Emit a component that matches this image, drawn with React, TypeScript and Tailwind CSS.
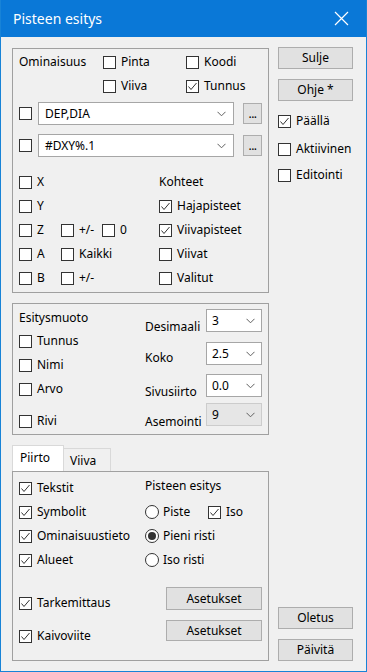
import React from 'react';

const font = { fontFamily: '"Segoe UI", "Noto Sans", "Open Sans", sans-serif' };

const Check: React.FC<{ checked?: boolean }> = ({ checked }) => (
  <span className="w-[13px] h-[13px] shrink-0 border border-[#333333] bg-white flex items-center justify-center">
    {checked && (
      <svg width="11" height="11" viewBox="0 0 11 11">
        <polyline points="1.5,5.5 4,8.5 9.5,2" fill="none" stroke="#333333" strokeWidth="1" />
      </svg>
    )}
  </span>
);

const Radio: React.FC<{ checked?: boolean }> = ({ checked }) => (
  <span className="w-[14px] h-[14px] shrink-0 rounded-full border border-[#333333] bg-white flex items-center justify-center">
    {checked && <span className="w-[8px] h-[8px] rounded-full bg-[#333333]" />}
  </span>
);

const CheckItem: React.FC<{ label?: string; checked?: boolean; className?: string }> = ({ label, checked, className }) => (
  <div className={`flex items-center whitespace-nowrap ${className ?? ''}`}>
    <Check checked={checked} />
    {label && <span className="ml-[5px]">{label}</span>}
  </div>
);

const Chevron: React.FC = () => (
  <svg width="9" height="6" viewBox="0 0 9 6">
    <polyline points="0.5,0.8 4.5,4.8 8.5,0.8" fill="none" stroke="#606060" strokeWidth="1" />
  </svg>
);

const Button: React.FC<{ label: string; className?: string }> = ({ label, className }) => (
  <div className={`border border-[#adadad] bg-[#e1e1e1] flex items-center justify-center ${className ?? ''}`}>
    {label}
  </div>
);

const Combo: React.FC<{ value: string }> = ({ value }) => (
  <div className="ml-[6px] w-[196px] h-[23px] border border-[#a6a6a6] bg-white flex items-center justify-between pl-[6px] pr-[7px]">
    <span>{value}</span>
    <Chevron />
  </div>
);

const Select: React.FC<{ value: string; disabled?: boolean }> = ({ value, disabled }) => (
  <div
    className={`w-[56px] h-[23px] border flex items-center justify-between pl-[5px] pr-[6px] shrink-0 ${
      disabled ? 'bg-[#e6e6e6] border-[#cccccc]' : 'bg-white border-[#a6a6a6]'
    }`}
  >
    <span>{value}</span>
    <Chevron />
  </div>
);

const SelectRow: React.FC<{ label: string; value: string; labelTop: string; rowTop: string; disabled?: boolean }> = ({
  label,
  value,
  labelTop,
  rowTop,
  disabled,
}) => (
  <div className={`h-[23px] flex items-start justify-between ${rowTop}`}>
    <span className={`whitespace-nowrap ${labelTop}`}>{label}</span>
    <Select value={value} disabled={disabled} />
  </div>
);

export default function App() {
  return (
    <div
      className="w-[367px] h-[672px] bg-[#f0f0f0] border-x border-b border-[#1883d7] flex flex-col text-[12px] leading-[16px] text-black overflow-hidden"
      style={font}
    >
      {/* title bar */}
      <div className="h-[37px] shrink-0 bg-[#0a78d7] flex items-center justify-between pl-[12px] pr-[17px] text-white">
        <span className="text-[14px] leading-[20px]">Pisteen esitys</span>
        <svg width="15" height="15" viewBox="0 0 15 15">
          <path d="M1 1 L14 14 M14 1 L1 14" stroke="white" strokeWidth="1.2" />
        </svg>
      </div>

      <div className="flex pl-[11px]">
        {/* left column */}
        <div className="w-[257px] flex flex-col">
          {/* group 1 */}
          <div className="mt-[11px] h-[245px] border border-[#a0a0a0] pl-[6px] flex flex-col">
            <div className="mt-[1px] h-[24px] flex items-center">
              <span className="w-[84px]">Ominaisuus</span>
              <CheckItem label="Pinta" className="w-[83px]" />
              <CheckItem label="Koodi" />
            </div>
            <div className="h-[24px] flex items-center pl-[84px]">
              <CheckItem label="Viiva" className="w-[83px]" />
              <CheckItem label="Tunnus" checked />
            </div>
            <div className="mt-[4px] h-[23px] flex items-center">
              <Check />
              <Combo value="DEP,DIA" />
              <Button label="..." className="ml-[9px] w-[19px] h-[21px] tracking-[-0.5px]" />
            </div>
            <div className="mt-[9px] h-[23px] flex items-center">
              <Check />
              <Combo value="#DXY%.1" />
              <Button label="..." className="ml-[9px] w-[19px] h-[21px] tracking-[-0.5px]" />
            </div>
            <div className="mt-[13px] flex flex-col">
              <div className="h-[24px] flex items-center">
                <CheckItem label="X" className="w-[42px]" />
                <div className="w-[98px]" />
                <span>Kohteet</span>
              </div>
              <div className="h-[24px] flex items-center">
                <CheckItem label="Y" className="w-[42px]" />
                <div className="w-[98px]" />
                <CheckItem label="Hajapisteet" checked />
              </div>
              <div className="h-[24px] flex items-center">
                <CheckItem label="Z" className="w-[42px]" />
                <CheckItem label="+/-" className="w-[41px]" />
                <CheckItem label="0" className="w-[57px]" />
                <CheckItem label="Viivapisteet" checked />
              </div>
              <div className="h-[24px] flex items-center">
                <CheckItem label="A" className="w-[42px]" />
                <CheckItem label="Kaikki" className="w-[98px]" />
                <CheckItem label="Viivat" />
              </div>
              <div className="h-[24px] flex items-center">
                <CheckItem label="B" className="w-[42px]" />
                <CheckItem label="+/-" className="w-[98px]" />
                <CheckItem label="Valitut" />
              </div>
            </div>
          </div>

          {/* group 2 */}
          <div className="mt-[10px] h-[132px] border border-[#a0a0a0] pl-[6px] pr-[6px] flex">
            <div className="w-[126px] flex flex-col">
              <span className="mt-[6px]">Esitysmuoto</span>
              <CheckItem label="Tunnus" className="mt-[3px] h-[24px]" />
              <CheckItem label="Nimi" className="h-[24px]" />
              <CheckItem label="Arvo" className="h-[24px]" />
              <CheckItem label="Rivi" className="mt-[8px] h-[24px]" />
            </div>
            <div className="w-[117px] flex flex-col">
              <SelectRow label="Desimaali" value="3" rowTop="mt-[5px]" labelTop="mt-[10px]" />
              <SelectRow label="Koko" value="2.5" rowTop="mt-[10px]" labelTop="mt-[8px]" />
              <SelectRow label="Sivusiirto" value="0.0" rowTop="mt-[9px]" labelTop="mt-[10px]" />
              <SelectRow label="Asemointi" value="9" rowTop="mt-[6px]" labelTop="mt-[11px]" disabled />
            </div>
          </div>

          {/* tabs */}
          <div className="mt-[10px] h-[26px] flex items-end">
            <div className="w-[52px] h-[26px] bg-white border-t border-l border-r border-[#d9d9d9] pl-[7px] pt-[4px]">Piirto</div>
            <div className="w-[47px] h-[23px] bg-[#f0f0f0] border-t border-r border-[#d9d9d9] pl-[6px] pt-[4px]">Viiva</div>
          </div>
          <div className="h-[190px] border border-[#a0a0a0] pl-[6px] pt-[4px] flex flex-col">
            <div className="h-[24px] flex items-center">
              <CheckItem label="Tekstit" checked className="w-[126px]" />
              <span className="-mt-[4px]">Pisteen esitys</span>
            </div>
            <div className="h-[24px] flex items-center">
              <CheckItem label="Symbolit" checked className="w-[126px]" />
              <div className="w-[63px] flex items-center">
                <Radio />
                <span className="ml-[4px]">Piste</span>
              </div>
              <CheckItem label="Iso" checked />
            </div>
            <div className="h-[24px] flex items-center">
              <CheckItem label="Ominaisuustieto" checked className="w-[126px]" />
              <Radio checked />
              <span className="ml-[4px]">Pieni risti</span>
            </div>
            <div className="h-[24px] flex items-center">
              <CheckItem label="Alueet" checked className="w-[126px]" />
              <Radio />
              <span className="ml-[4px]">Iso risti</span>
            </div>
            <div className="mt-[15px] flex items-start">
              <CheckItem label="Tarkemittaus" checked className="w-[147px] mt-[8px]" />
              <Button label="Asetukset" className="w-[96px] h-[23px]" />
            </div>
            <div className="mt-[9px] flex items-start">
              <CheckItem label="Kaivoviite" checked className="w-[147px] mt-[8px]" />
              <Button label="Asetukset" className="w-[96px] h-[21px]" />
            </div>
          </div>
        </div>

        {/* right column */}
        <div className="ml-[9px] w-[75px] flex flex-col">
          <Button label="Sulje" className="mt-[10px] h-[22px]" />
          <Button label="Ohje *" className="mt-[10px] h-[22px]" />
          <CheckItem label="Päällä" checked className="mt-[8px] h-[24px]" />
          <CheckItem label="Aktiivinen" className="mt-[4px] h-[24px]" />
          <CheckItem label="Editointi" className="mt-[2px] h-[24px]" />
          <Button label="Oletus" className="mt-[420px] h-[22px]" />
          <Button label="Päivitä" className="mt-[10px] h-[22px]" />
        </div>
      </div>
    </div>
  );
}
